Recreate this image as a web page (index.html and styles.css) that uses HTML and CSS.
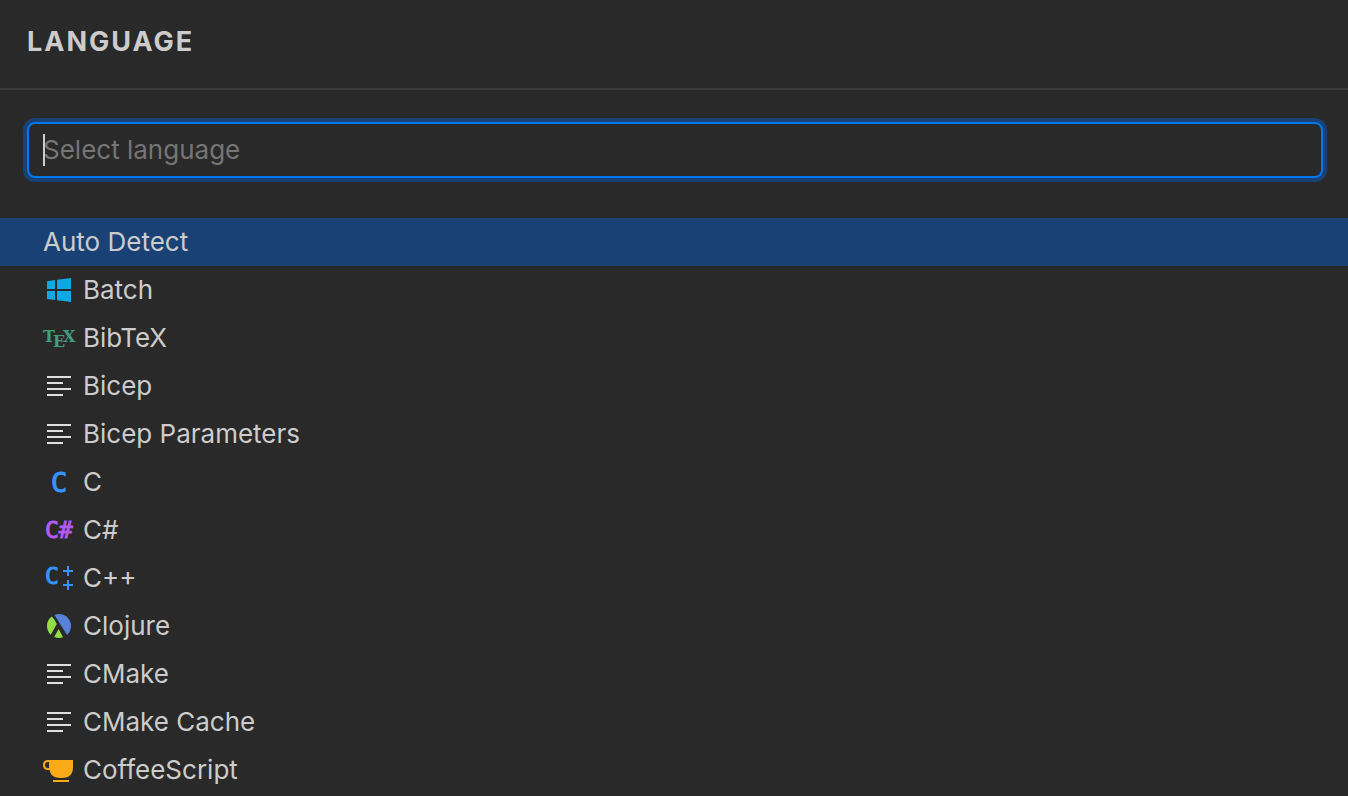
FILE: index.html
```html
<!DOCTYPE html>
<html lang="en">
<head>
  <meta charset="UTF-8">
  <title>Language</title>
  <link rel="stylesheet" href="styles.css">
</head>
<body>
  <svg class="sprite" aria-hidden="true">
    <symbol id="lines" viewBox="0 0 32 32">
      <path fill="#dedede" d="M4 6h24v2H4zM4 12h16v2H4zM4 18h24v2H4zM4 24h16v2H4z"/>
    </symbol>
  </svg>

  <header class="header">
    <h1>LANGUAGE</h1>
  </header>

  <div class="search">
    <input type="text" id="language" aria-label="Select language" placeholder="Select language" autocomplete="off">
    <span class="caret"></span>
  </div>

  <ul class="languages">
    <li><button type="button" class="selected">Auto Detect</button></li>
    <li><button type="button">
      <svg class="icon" viewBox="0 0 32 32"><path fill="#0fa8e6" d="M4 7.2l8-1.1V15H4zM14 5.8L28 4v11H14zM4 17h8v9l-8-1.1zM14 17h14v11l-14-1.8z"/></svg>
      Batch</button></li>
    <li><button type="button">
      <svg class="icon tex" viewBox="0 0 32 32"><text x="0" y="20">T<tspan dx="-2" dy="5">E</tspan><tspan dx="-2" dy="-5">X</tspan></text></svg>
      BibTeX</button></li>
    <li><button type="button">
      <svg class="icon"><use href="#lines"/></svg>
      Bicep</button></li>
    <li><button type="button">
      <svg class="icon"><use href="#lines"/></svg>
      Bicep Parameters</button></li>
    <li><button type="button">
      <svg class="icon letters blue large" viewBox="0 0 32 32"><text x="8" y="26">C</text></svg>
      C</button></li>
    <li><button type="button">
      <svg class="icon letters purple" viewBox="0 0 32 32"><text x="2" y="24">C#</text></svg>
      C#</button></li>
    <li><button type="button">
      <svg class="icon letters blue" viewBox="0 0 32 32"><text x="2" y="22">C</text><path fill="#3794ff" d="M24 4h2v4h4v2h-4v4h-2v-4h-4V8h4zM24 18h2v4h4v2h-4v4h-2v-4h-4v-2h4z"/></svg>
      C++</button></li>
    <li><button type="button">
      <svg class="icon" viewBox="0 0 32 32"><path fill="#5881d8" d="M11.500 4.900A12 12 0 0 1 24 25z"/><path fill="#91dc47" d="M8.800 6.400Q12 9.500 13.800 14L7.800 24.800A12 12 0 0 1 8.800 6.400zM15.700 19L20 27.300Q15.800 28.800 11.200 27.100z"/></svg>
      Clojure</button></li>
    <li><button type="button">
      <svg class="icon"><use href="#lines"/></svg>
      CMake</button></li>
    <li><button type="button">
      <svg class="icon"><use href="#lines"/></svg>
      CMake Cache</button></li>
    <li><button type="button">
      <svg class="icon" viewBox="0 0 32 32"><path fill="#faa919" d="M6 6h24v7q0 11-11 11h-2Q8 24 6.500 16H5Q0 16 0 11t5-5zM6 8H5Q2 8 2 11t3 3h1zM10 26h16v2H10z"/></svg>
      CoffeeScript</button></li>
  </ul>
</body>
</html>
```

FILE: styles.css
```css
* {
  box-sizing: border-box;
}

body {
  margin: 0;
  background-color: #292929;
  color: #cccccc;
  font-family: Inter, sans-serif;
  font-size: 26px;
  line-height: 32px;
}

.sprite {
  display: none;
}

.header {
  padding: 26px 27px 30px;
  border-bottom: 2px solid #3a3a3a;
}

h1 {
  margin: 0;
  font-size: 27px;
  font-weight: 700;
  letter-spacing: 2px;
}

.search {
  position: relative;
  padding: 32px 25px 40px 27px;
}

input {
  display: block;
  width: 100%;
  height: 56px;
  padding: 0 14px 2px;
  border: 2px solid #0078f0;
  border-radius: 8px;
  outline: none;
  box-shadow: 0 0 0 4px #194176;
  background-color: transparent;
  color: inherit;
  font: inherit;
}

input::placeholder {
  color: #757575;
}

.caret {
  position: absolute;
  top: 44px;
  left: 43px;
  width: 2px;
  height: 32px;
  background-color: #cccccc;
}

.languages {
  margin: 0;
  padding: 0;
  list-style: none;
}

button {
  display: flex;
  align-items: center;
  gap: 8px;
  width: 100%;
  height: 48px;
  padding: 0 43px;
  border: none;
  background-color: transparent;
  color: inherit;
  font: inherit;
  text-align: left;
  cursor: pointer;
}

.selected {
  background-color: #194176;
}

.icon {
  width: 32px;
  height: 32px;
  flex: none;
  overflow: visible;
}

.tex {
  fill: #3e9f80;
  font: bold 16px "DejaVu Serif", serif;
}

.letters {
  font: 23px "DejaVu Sans Mono", monospace;
  stroke-width: 1px;
}

.letters path {
  stroke: none;
}

.large {
  font-size: 27px;
}

.blue {
  fill: #3794ff;
  stroke: #3794ff;
}

.purple {
  fill: #b45cf0;
  stroke: #b45cf0;
}
```
